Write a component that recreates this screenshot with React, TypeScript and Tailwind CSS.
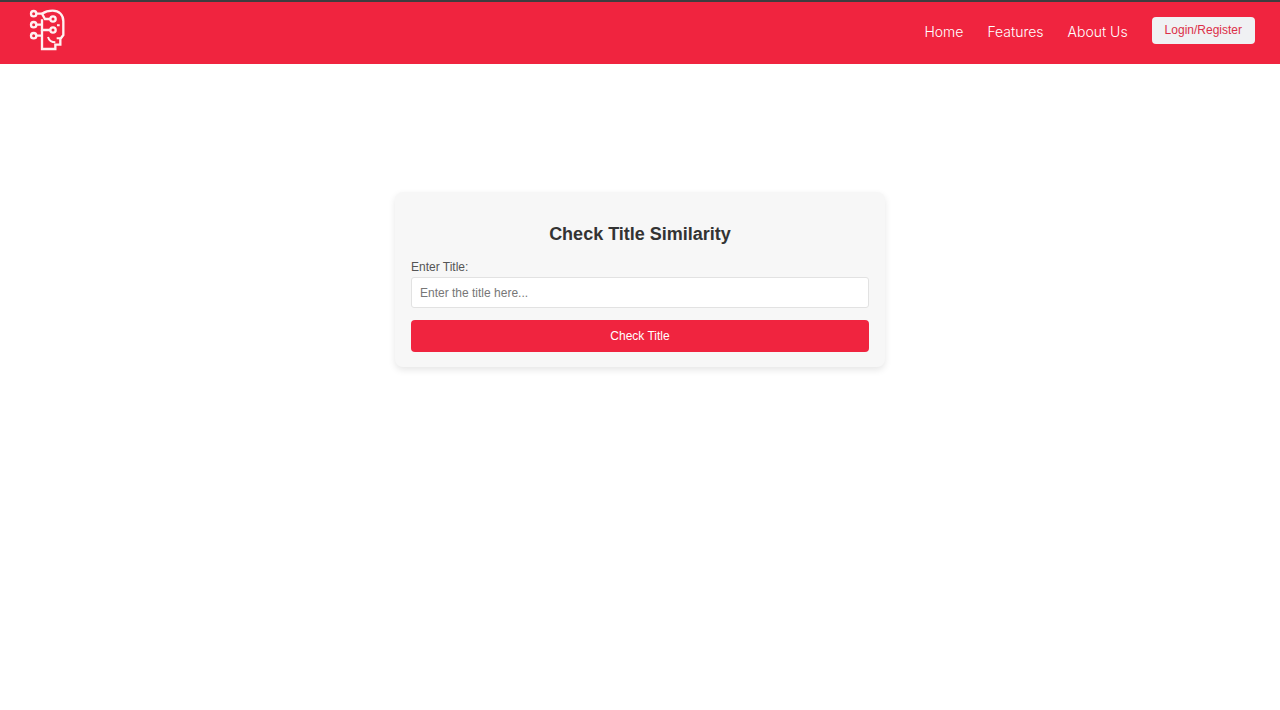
function Logo() {
  return (
    <svg
      viewBox="27 27 111 126"
      className="h-[42px] w-[37px]"
      fill="none"
      stroke="#fff1f1"
      strokeWidth="7"
      role="img"
      aria-label="Logo"
    >
      <circle cx="41" cy="41" r="8" />
      <circle cx="41" cy="74" r="8" />
      <circle cx="41" cy="107" r="8" />
      <circle cx="99" cy="57" r="8" />
      <circle cx="99" cy="90" r="8" />
      <path d="M49 41H66L75 57H91" />
      <path d="M49 74H66M66 58V90H91" />
      <path d="M49 107H66M66 90V147H106V134H121V117L130 105V64C130 44 117 32 98 32C85 32 75 35 66 41" />
      <path d="M84 111C87 121 94 127 106 127M110 115H122M111 76H119" strokeWidth="6" />
    </svg>
  );
}

const links = ["Home", "Features", "About Us"];

export default function App() {
  return (
    <div className="min-h-screen bg-white font-['Liberation_Sans',Arial,sans-serif]">
      <header className="flex h-16 items-start justify-between border-t-2 border-[#3d3d3f] bg-[#f0243f] pr-[25px] pl-[29px]">
        <a href="#home" className="mt-[7px]">
          <Logo />
        </a>
        <nav className="mt-[15px] flex items-center gap-6 font-['Inter',sans-serif] text-sm font-light text-white">
          {links.map((label) => (
            <a key={label} href="#" className="pt-0.5">
              {label}
            </a>
          ))}
          <button
            type="button"
            className="h-[27px] rounded bg-[#f0f1f3] px-[13px] font-['Liberation_Sans',Arial,sans-serif] text-[12px] font-normal text-[#dc2f48]"
          >
            Login/Register
          </button>
        </nav>
      </header>
      <main className="px-4 pt-32">
        <form
          className="mx-auto flex max-w-[490px] flex-col rounded-lg bg-[#f7f7f7] px-4 pt-[30px] pb-[15px] shadow-[0_3px_7px_rgba(0,0,0,0.1)]"
          onSubmit={(event) => event.preventDefault()}
        >
          <h1 className="text-center text-lg leading-6 font-bold text-[#333]">
            Check Title Similarity
          </h1>
          <label htmlFor="title" className="mt-3 text-[12px] leading-[18px] text-[#555]">
            Enter Title:
          </label>
          <input
            id="title"
            type="text"
            placeholder="Enter the title here..."
            className="mt-[1px] h-[31px] w-full rounded-[3px] border border-[#e2e2e2] bg-white px-2 text-[12px] text-[#333] placeholder:text-[#777]"
          />
          <button
            type="submit"
            className="mt-3 h-8 w-full rounded bg-[#f0243f] text-[12px] text-white"
          >
            Check Title
          </button>
        </form>
      </main>
    </div>
  );
}
